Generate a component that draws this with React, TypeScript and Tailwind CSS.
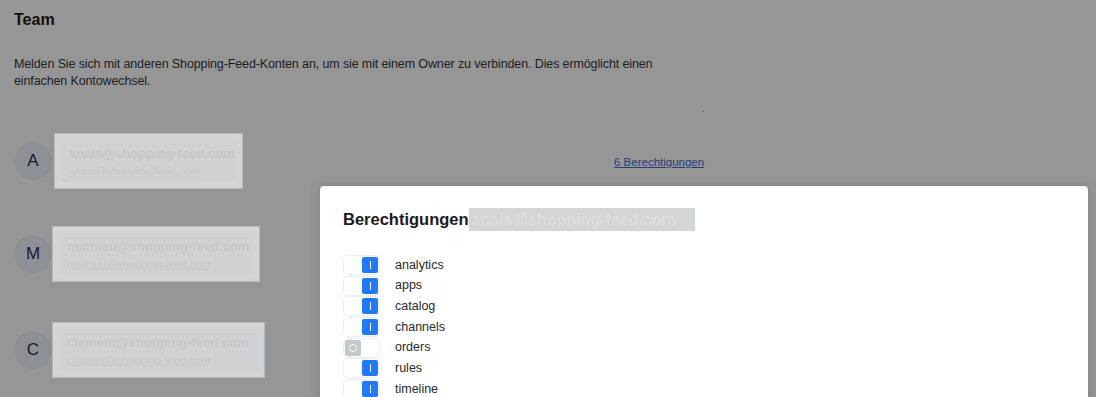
const members = [
  { letter: 'A', email: 'anais@shopping-feed.com', w: 'w-[189px]', mt: 'mt-0' },
  { letter: 'M', email: 'mathieu@shopping-feed.com', w: 'w-[208px]', mt: 'mt-[37px]' },
  { letter: 'C', email: 'clement@shopping-feed.com', w: 'w-[213px]', mt: 'mt-[40px]' },
]

const permissions = [
  { name: 'analytics', on: true },
  { name: 'apps', on: true },
  { name: 'catalog', on: true },
  { name: 'channels', on: true },
  { name: 'orders', on: false },
  { name: 'rules', on: true },
  { name: 'timeline', on: true },
]

function Toggle({ on }: { on: boolean }) {
  return (
    <div className="w-[37px] h-[20px] rounded-[5px] border border-[#eceef1] bg-white flex items-center px-[1px]">
      {on ? (
        <div className="ml-auto w-[16px] h-[16px] rounded-[2px] bg-[#1f7aff] flex items-center justify-center">
          <div className="w-[1px] h-[8px] bg-white" />
        </div>
      ) : (
        <div className="w-[16px] h-[16px] rounded-[2px] bg-[#c3c8cf] flex items-center justify-center">
          <div className="w-[8px] h-[8px] rounded-full border border-white" />
        </div>
      )}
    </div>
  )
}

export default function App() {
  return (
    <div
      className="relative w-[1096px] h-[397px] overflow-hidden bg-[#969696] text-[#1c1c24]"
      style={{ fontFamily: '"Liberation Sans", Arial, sans-serif' }}
    >
      <div className="px-[14px] pt-[10px]">
        <h1 className="text-[16px] leading-[20px] font-bold text-[#101010]">Team</h1>
        <p className="mt-[26px] w-[670px] text-[12.5px] leading-[17px] tracking-[-0.12px]">
          Melden Sie sich mit anderen Shopping-Feed-Konten an, um sie mit einem Owner zu verbinden. Dies ermöglicht einen einfachen Kontowechsel.
        </p>

        <div className="flex justify-end w-[690px] mt-[21px] h-[2px]">
          <div className="w-[1px] h-[1px] bg-[#555]" />
        </div>

        <div className="mt-[20px] flex flex-col">
          {members.map((m, i) => (
            <div key={m.letter} className={`flex items-center ${m.mt}`}>
              <div className="w-[38px] h-[38px] rounded-full bg-[#8d9196] flex items-center justify-center text-[17px] text-[#15192a]">
                {m.letter}
              </div>
              <div className={`${i === 0 ? 'ml-[2px]' : 'ml-0'} ${m.w} h-[56px] bg-[#d3d4d5] border border-[#b9babb] p-[6px]`}>
                <div className="h-full bg-[#d0d1d2] px-[8px] pt-[5px] overflow-hidden">
                  <div className="text-[13px] leading-[17px] font-bold text-[#c7c8c9] whitespace-nowrap">{m.email}</div>
                  <div className="mt-[2px] text-[11px] leading-[14px] text-[#c9cacb] underline whitespace-nowrap">{m.email}</div>
                </div>
              </div>
              {i === 0 && (
                <a className="ml-[371px] mt-[3px] text-[11.5px] text-[#22407f] underline">6 Berechtigungen</a>
              )}
            </div>
          ))}
        </div>
      </div>

      <div className="absolute left-[320px] top-[186px] w-[768px] h-[240px] bg-white rounded-t-[4px] shadow-[0_0_12px_rgba(0,0,0,0.15)] px-[23px] pt-[21px]">
        <div className="flex items-center">
          <h2 className="text-[16.5px] leading-[24px] font-bold text-[#1a1a1a]">Berechtigungen</h2>
          <div className="w-[226px] h-[23px] bg-[#d4d5d6] text-[16px] leading-[23px] font-bold text-[#dcddde] px-[3px] whitespace-nowrap overflow-hidden">
            anais@shopping-feed.com
          </div>
        </div>
        <div className="mt-[24px] flex flex-col gap-[0.7px]">
          {permissions.map((p) => (
            <div key={p.name} className="flex items-center h-[20px]">
              <Toggle on={p.on} />
              <span className="ml-[15px] text-[12.5px] text-[#2a2a2a]">{p.name}</span>
            </div>
          ))}
        </div>
      </div>
    </div>
  )
}
